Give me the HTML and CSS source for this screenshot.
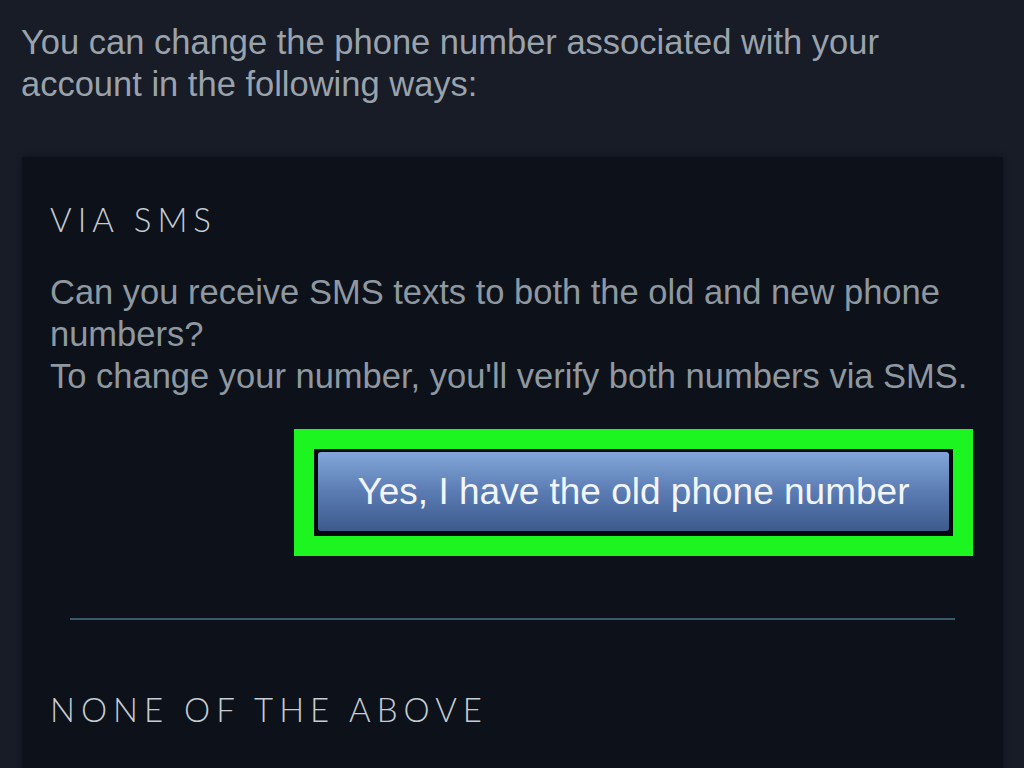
FILE: index.html
```html
<!DOCTYPE html>
<html lang="en">
<head>
  <meta charset="UTF-8" />
  <meta name="viewport" content="width=device-width, initial-scale=1.0"/>
  <title>Change Phone Number</title>
  <link rel="stylesheet" href="styles.css">
</head>
<body>
  <p class="intro">You can change the phone number associated with your account in the following ways:</p>

  <section class="panel">
    <div class="option">
      <h2>Via SMS</h2>
      <p>Can you receive SMS texts to both the old and new phone numbers?<br>To change your number, you'll verify both numbers via SMS.</p>
      <div class="actions">
        <div class="highlight">
          <button class="btn-blue">Yes, I have the old phone number</button>
        </div>
      </div>
    </div>

    <hr class="divider">

    <div class="option">
      <h2>None of the above</h2>
    </div>
  </section>
</body>
</html>
```

FILE: styles.css
```css
* { margin: 0; padding: 0; box-sizing: border-box; }

html, body {
  background-color: #171c27;
  font-family: 'Liberation Sans', Arial, sans-serif;
  color: #8f98a0;
  height: 100%;
  overflow: hidden;
}

.intro {
  padding: 21px 60px 0 21px;
  font-size: 34.5px;
  line-height: 42px;
  color: #9aa2ac;
}

.panel {
  margin: 52px 21px 0 22px;
  background-color: #0d121a;
  box-shadow: 0 0 6px rgba(0, 0, 0, 0.35);
  padding: 0 28px 60px;
  min-height: 700px;
}

.option h2 {
  font-family: 'Lato', sans-serif;
  font-weight: 300;
  font-size: 33px;
  line-height: 40px;
  letter-spacing: 6px;
  text-transform: uppercase;
  color: #c5ccd3;
  padding-top: 42px;
}

.option p {
  margin-top: 32px;
  font-size: 34.5px;
  line-height: 42px;
  color: #8f98a0;
}

.actions {
  display: flex;
  justify-content: flex-end;
  margin-top: 32px;
  margin-right: 2px;
}

.highlight {
  border: 20px solid #1cf520;
  background-color: #05080c;
  padding: 3px 4px 5px 4px;
}

.btn-blue {
  display: block;
  width: 631px;
  height: 79px;
  border: none;
  border-radius: 3px;
  background: linear-gradient(to bottom, #82a6da 0%, #5a7cb3 50%, #3d5a8c 100%);
  color: #f2f6fb;
  font-family: 'Liberation Sans', Arial, sans-serif;
  font-size: 37px;
  cursor: pointer;
}

.divider {
  border: none;
  height: 2px;
  background-color: #3a5868;
  margin: 62px 20px 0;
}

.divider + .option h2 {
  padding-top: 69px;
}
```
